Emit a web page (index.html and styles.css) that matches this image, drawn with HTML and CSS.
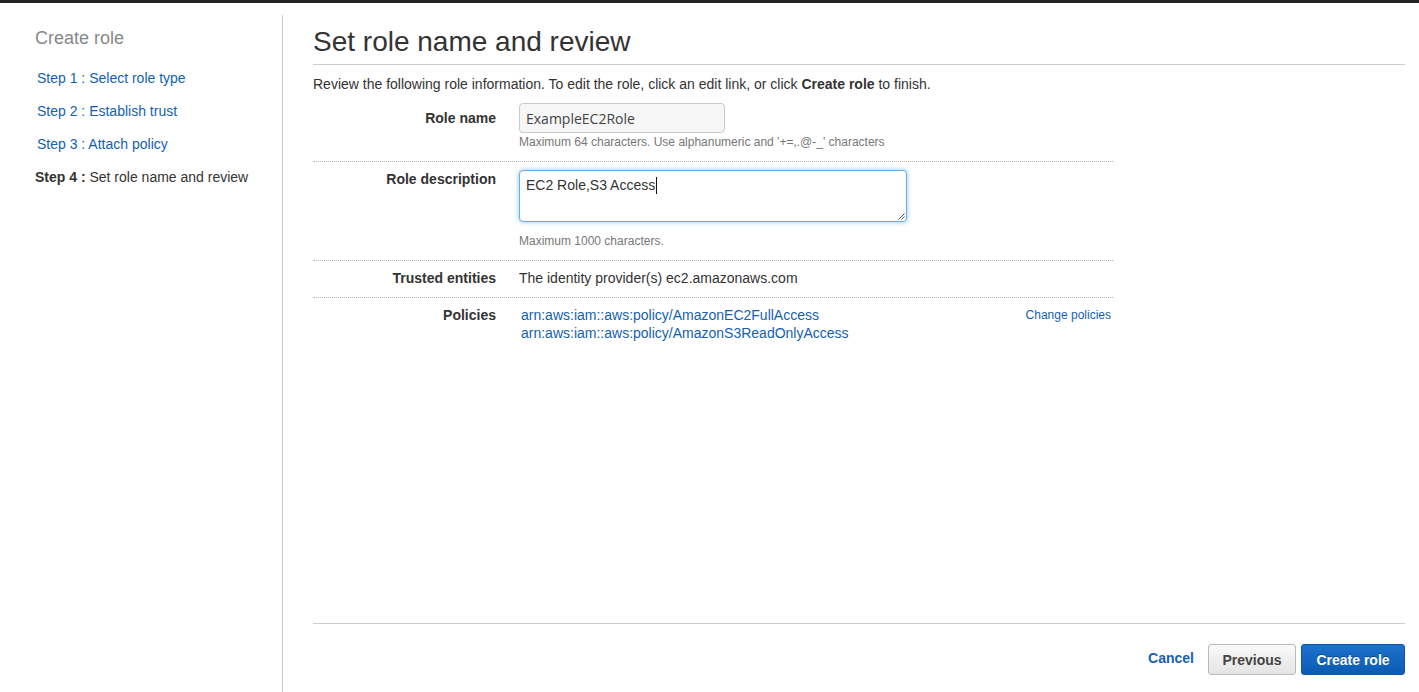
FILE: index.html
```html
<!DOCTYPE html>
<html lang="en">
<head>
<meta charset="utf-8">
<title>Create role</title>
<link rel="stylesheet" href="styles.css">
</head>
<body>
<div class="topbar"></div>
<div class="layout">
  <aside class="sidebar">
    <h2 class="side-title">Create role</h2>
    <ul class="steps">
      <li><a class="step-link" href="#">Step 1 : Select role type</a></li>
      <li><a class="step-link" href="#">Step 2 : Establish trust</a></li>
      <li><a class="step-link" href="#">Step 3 : Attach policy</a></li>
      <li class="current"><b>Step 4 :</b> Set role name and review</li>
    </ul>
  </aside>
  <main class="main">
    <h1 class="page-title">Set role name and review</h1>
    <p class="intro">Review the following role information. To edit the role, click an edit link, or click <b>Create role</b> to finish.</p>
    <div class="form">
      <div class="row row-name">
        <div class="label label-name">Role name</div>
        <div class="value">
          <input class="text-input" type="text" value="ExampleEC2Role">
          <div class="help help-name">Maximum 64 characters. Use alphanumeric and '+=,.@-_' characters</div>
        </div>
      </div>
      <div class="row row-desc">
        <div class="label">Role description</div>
        <div class="value">
          <div class="textarea">EC2 Role,S3 Access<span class="caret"></span>
            <svg class="grip" width="8" height="8" viewBox="0 0 8 8"><path d="M7.5 1.5 L1.5 7.5 M7.5 4.5 L4.5 7.5" stroke="#555" stroke-width="1" fill="none"/></svg>
          </div>
          <div class="help help-desc">Maximum 1000 characters.</div>
        </div>
      </div>
      <div class="row row-trust">
        <div class="label">Trusted entities</div>
        <div class="value">The identity provider(s) ec2.amazonaws.com</div>
      </div>
      <div class="row row-policies">
        <div class="label">Policies</div>
        <div class="value policies">
          <div class="policy-list">
            <a class="policy-link" href="#">arn:aws:iam::aws:policy/AmazonEC2FullAccess</a>
            <a class="policy-link" href="#">arn:aws:iam::aws:policy/AmazonS3ReadOnlyAccess</a>
          </div>
          <a class="change-link" href="#">Change policies</a>
        </div>
      </div>
    </div>
    <div class="footer">
      <a class="cancel" href="#">Cancel</a>
      <button class="btn btn-prev" type="button">Previous</button>
      <button class="btn btn-primary" type="button">Create role</button>
    </div>
  </main>
</div>
</body>
</html>
```

FILE: styles.css
```css
html, body {
  margin: 0;
  padding: 0;
  background: #fff;
}
body {
  font-family: "Liberation Sans", Arial, Helvetica, sans-serif;
  font-size: 14px;
  color: #333;
}
a {
  text-decoration: none;
  color: #135fb3;
}
.topbar {
  height: 3px;
  background: #232323;
}
.layout {
  display: flex;
  height: calc(100vh - 3px);
}
.sidebar {
  box-sizing: border-box;
  width: 283px;
  flex-shrink: 0;
  margin-top: 12px;
  border-right: 1px solid #cccccc;
  padding-left: 35px;
}
.side-title {
  margin: 0;
  padding-top: 12px;
  font-size: 18px;
  line-height: 22px;
  font-weight: normal;
  color: #888888;
}
.steps {
  list-style: none;
  margin: 13px 0 0;
  padding: 0;
}
.steps li {
  height: 33px;
  line-height: 33px;
  white-space: nowrap;
}
.step-link {
  padding-left: 2px;
}
.steps .current {
  color: #333;
}
.main {
  flex: 1;
  min-width: 0;
  display: flex;
  flex-direction: column;
  padding: 22px 14px 0 30px;
}
.page-title {
  margin: 0;
  font-size: 28px;
  line-height: 34px;
  font-weight: normal;
  color: #333;
  padding-bottom: 5px;
  border-bottom: 1px solid #cccccc;
}
.intro {
  margin: 10px 0 0;
  line-height: 18px;
}
.form {
  width: 800px;
  flex: 1;
}
.row {
  display: flex;
  border-bottom: 1px dotted #b8b8b8;
}
.label {
  width: 183px;
  flex-shrink: 0;
  text-align: right;
  font-weight: bold;
  line-height: 18px;
}
.value {
  flex: 1;
  margin-left: 23px;
  line-height: 18px;
}
.row-name {
  padding: 10px 0 12px;
}
.label-name {
  margin-top: 6px;
}
.text-input {
  display: block;
  box-sizing: border-box;
  width: 206px;
  height: 30px;
  margin: 0;
  padding: 0 6px;
  border: 1px solid #c9c9c9;
  border-radius: 4px;
  background: #f6f6f6;
  font-family: "Open Sans", "Liberation Sans", sans-serif;
  font-size: 14px;
  color: #444;
  outline: none;
}
.help {
  font-size: 12px;
  line-height: 14px;
  color: #777;
}
.help-name {
  margin-top: 2px;
}
.row-desc {
  padding: 8px 0 12px;
}
.textarea {
  position: relative;
  box-sizing: border-box;
  width: 388px;
  height: 52px;
  padding: 5px 6px;
  border: 1px solid #66afe9;
  border-radius: 4px;
  box-shadow: 0 0 5px rgba(102, 175, 233, 0.75);
  line-height: 18px;
  color: #333;
  background: #fff;
}
.caret {
  display: inline-block;
  width: 1px;
  height: 17px;
  background: #111;
  vertical-align: -4px;
  margin-left: 1px;
}
.grip {
  position: absolute;
  right: 1px;
  bottom: 1px;
}
.help-desc {
  margin-top: 12px;
}
.row-trust {
  padding: 8px 0 10px;
}
.row-policies {
  padding: 8px 0 0;
  border-bottom: none;
}
.policies {
  display: flex;
  justify-content: space-between;
}
.policy-list {
  display: flex;
  flex-direction: column;
  padding-left: 2px;
}
.change-link {
  font-size: 12px;
  line-height: 18px;
  padding-right: 2px;
}
.footer {
  border-top: 1px solid #cccccc;
  padding: 20px 0 17px;
  display: flex;
  justify-content: flex-end;
  align-items: center;
}
.cancel {
  font-weight: bold;
  line-height: 28px;
  margin-right: 14px;
  margin-top: -3px;
}
.btn {
  box-sizing: border-box;
  height: 31px;
  margin: 0;
  padding: 0;
  border-radius: 3px;
  font-family: "Liberation Sans", Arial, Helvetica, sans-serif;
  font-size: 14px;
  font-weight: bold;
  cursor: pointer;
}
.btn-prev {
  width: 88px;
  border: 1px solid #b9b9b9;
  background: linear-gradient(#fafafa, #e4e4e4);
  color: #444;
}
.btn-primary {
  width: 104px;
  margin-left: 5px;
  border: 1px solid #0d55a6;
  background: linear-gradient(#1d72cc, #0b5bb4);
  color: #fff;
  text-shadow: 0 -1px 0 rgba(0, 0, 0, 0.35);
}
```
